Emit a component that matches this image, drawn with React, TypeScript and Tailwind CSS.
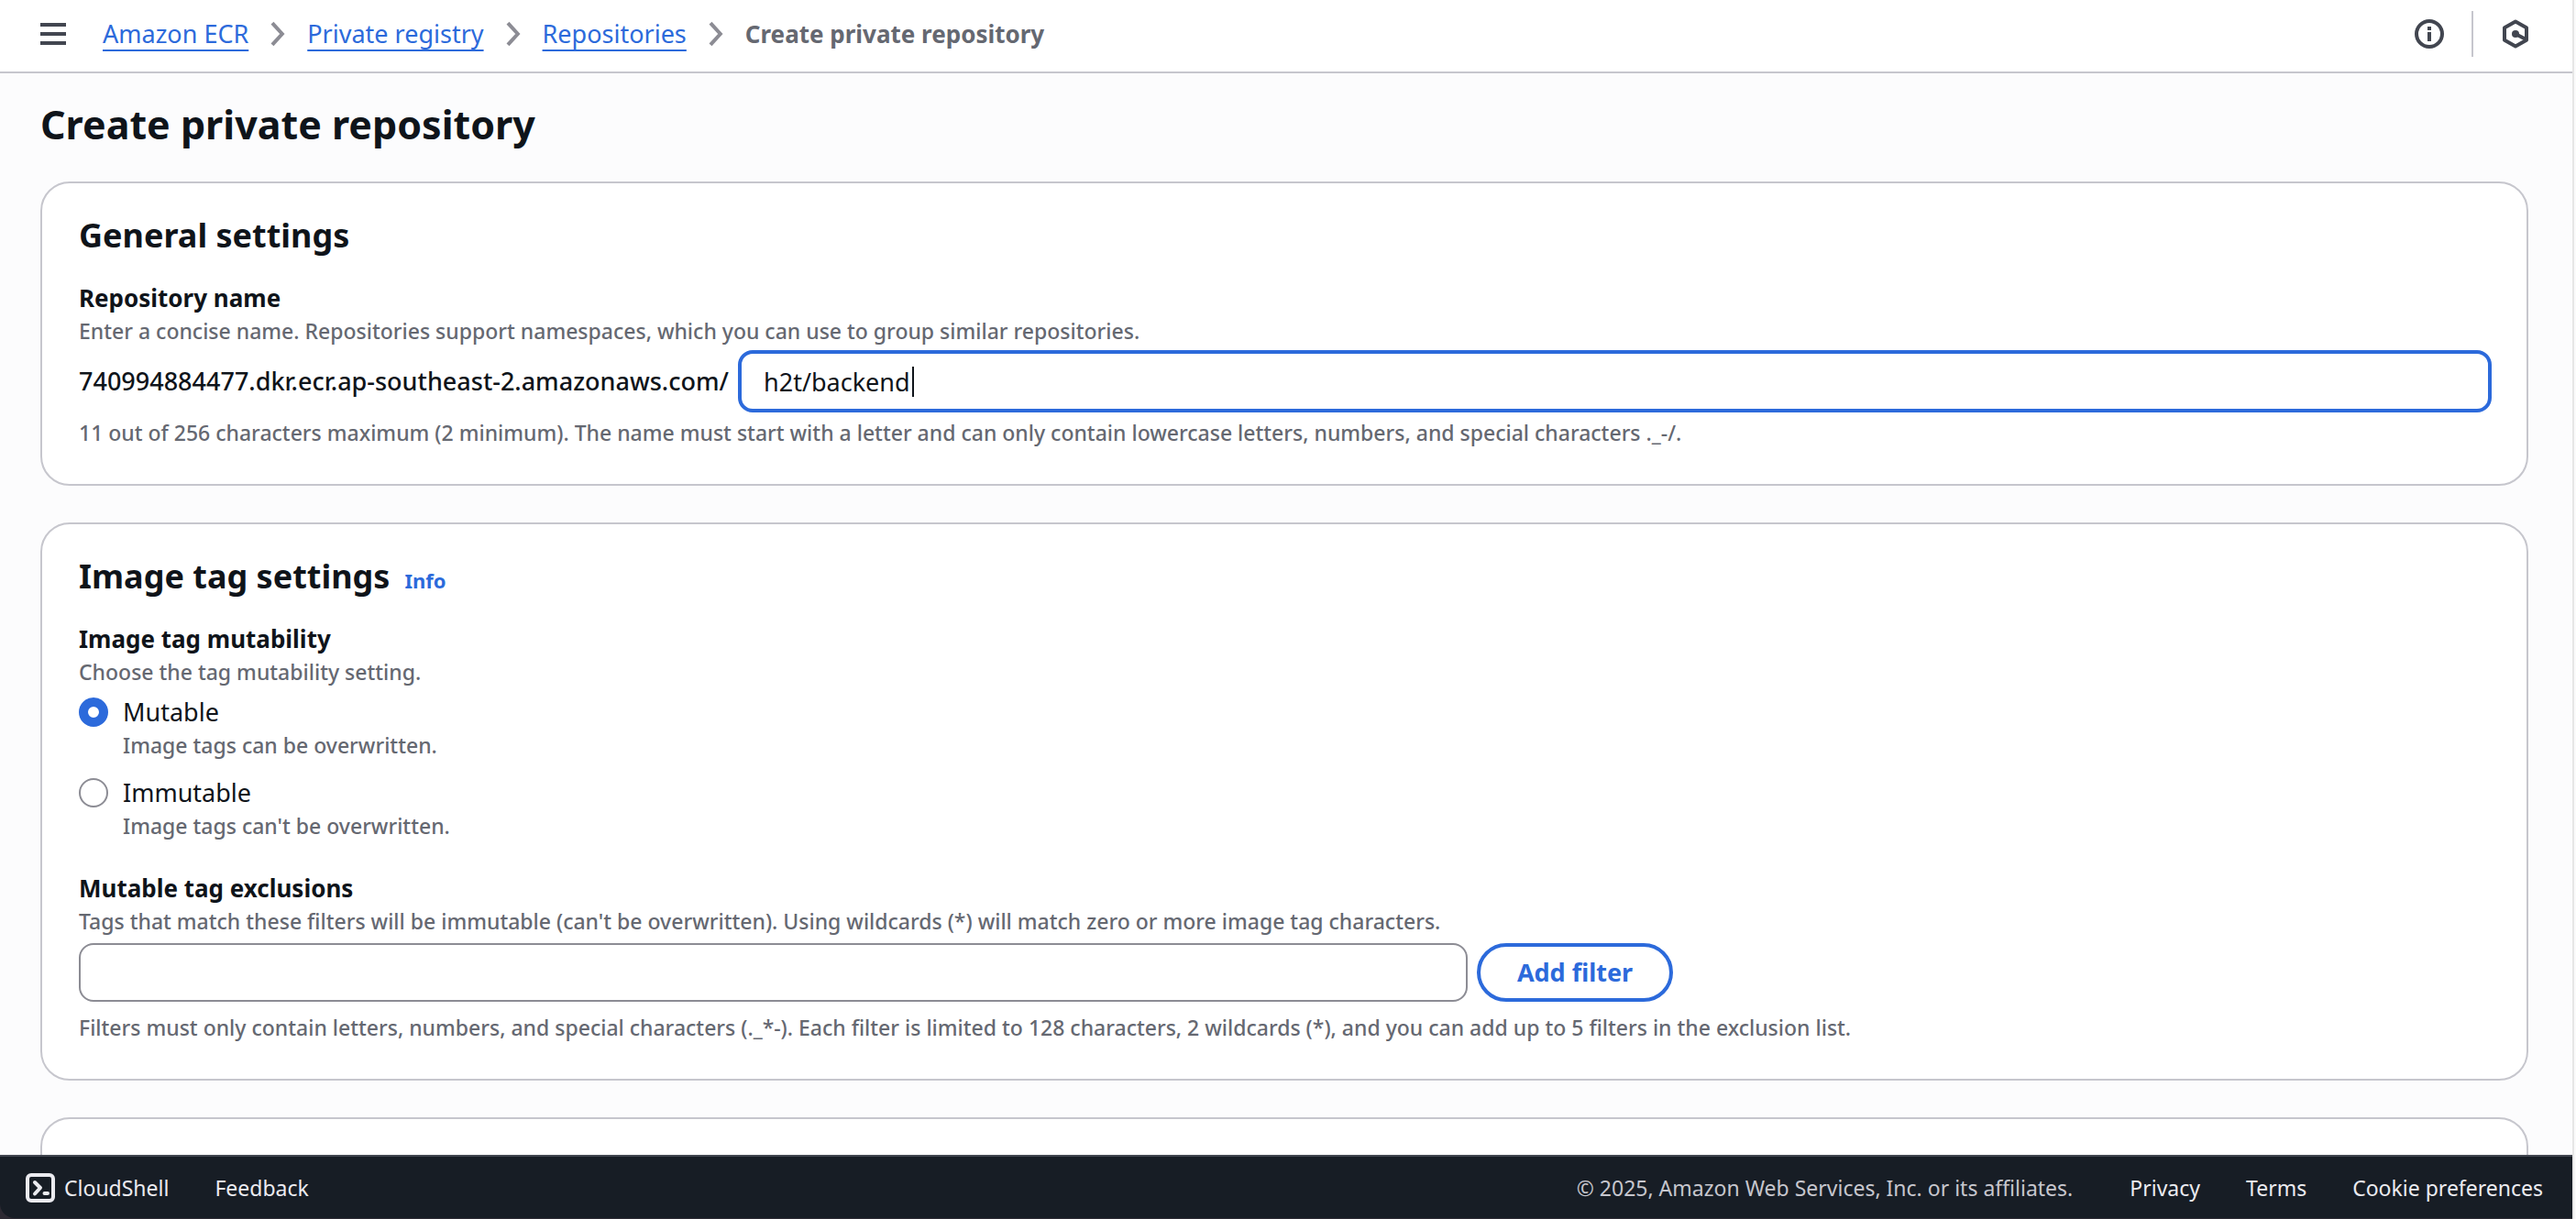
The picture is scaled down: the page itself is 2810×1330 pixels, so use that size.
import { useState, type ReactNode } from "react";

const crumbs = ["Amazon ECR", "Private registry", "Repositories"];

const tagModes = [
  { id: "mutable", label: "Mutable", hint: "Image tags can be overwritten." },
  { id: "immutable", label: "Immutable", hint: "Image tags can't be overwritten." },
];

function ChevronIcon() {
  return (
    <svg viewBox="0 0 16 28" className="h-7 w-4 shrink-0" fill="none" stroke="#8c8c94" strokeWidth="4" aria-hidden="true">
      <path d="M2 2.2 12.8 14 2 25.8" />
    </svg>
  );
}

function MenuIcon() {
  return (
    <svg viewBox="0 0 28 24" className="h-6 w-7" fill="#424650" aria-hidden="true">
      <path d="M0 0h28v4H0zM0 10h28v4H0zM0 20h28v4H0z" />
    </svg>
  );
}

function InfoIcon() {
  return (
    <svg viewBox="0 0 32 32" className="size-8" aria-hidden="true">
      <circle cx="16" cy="16" r="14" fill="none" stroke="#424650" strokeWidth="4" />
      <path d="M14 8h4v4h-4zM14 14h4v10h-4z" fill="#424650" />
    </svg>
  );
}

function HexagonIcon() {
  return (
    <svg viewBox="0 0 32 32" className="size-8" fill="none" stroke="#424650" strokeWidth="4" strokeLinejoin="round" aria-hidden="true">
      <path d="M16 2.6 28 9.3v13.4L16 29.4 4 22.7V9.3z" />
      <path d="m16 16 11 5.8" />
      <circle cx="16" cy="16" r="4" fill="#424650" stroke="none" />
    </svg>
  );
}

function ShellIcon() {
  return (
    <svg viewBox="0 0 32 32" className="size-8" fill="none" stroke="#ebebf0" strokeWidth="4" strokeLinecap="round" strokeLinejoin="round" aria-hidden="true">
      <rect x="2" y="2" width="28" height="28" rx="4" />
      <path d="m10 10 6 6-6 6.5M20.5 22h3.5" />
    </svg>
  );
}

function Card({ title, info, children }: { title?: string; info?: boolean; children?: ReactNode }) {
  return (
    <section className="min-h-40 shrink-0 rounded-[32px] border-2 border-[#c6c6cd] bg-white px-10 pt-[33px] pb-10">
      {title && (
        <div className="mb-6 flex items-baseline gap-4">
          <h2 className="text-[36px] leading-[48px] font-bold">{title}</h2>
          {info && (
            <a href="#info" className="text-[22px] leading-8 font-bold text-[#2c6adb]">
              Info
            </a>
          )}
        </div>
      )}
      {children}
    </section>
  );
}

function Hint({ id, children }: { id?: string; children: ReactNode }) {
  return (
    <p id={id} className="text-[23px] leading-8 font-medium text-[#656871]">
      {children}
    </p>
  );
}

export default function App() {
  const [name, setName] = useState("h2t/backend");
  const [mode, setMode] = useState("mutable");
  const [filter, setFilter] = useState("");

  return (
    <div className="h-screen bg-[#fafafa] pr-0.5 font-['Noto_Sans',sans-serif] text-[27px] leading-10 text-[#0f141a]">
      <div className="flex h-full flex-col border-r-2 border-[#e6e6e6] bg-[#fcfcfd]">
        <header className="flex items-center justify-between border-b-2 border-[#c6c6cd] bg-white pt-3 pr-[46px] pb-4 pl-11">
          <div className="flex items-center gap-10">
            <button type="button" aria-label="Open navigation">
              <MenuIcon />
            </button>
            <nav aria-label="Breadcrumbs">
              <ol className="flex items-center gap-6">
                {crumbs.map((crumb) => (
                  <li key={crumb} className="flex items-center gap-6">
                    <a href="#crumb" className="text-[#2c6adb] underline decoration-2 underline-offset-[7px] [text-decoration-skip-ink:none]">
                      {crumb}
                    </a>
                    <ChevronIcon />
                  </li>
                ))}
                <li aria-current="page" className="text-[26px] font-bold text-[#656871]">
                  Create private repository
                </li>
              </ol>
            </nav>
          </div>
          <div className="flex items-center gap-[30px]">
            <button type="button" aria-label="Information">
              <InfoIcon />
            </button>
            <div className="h-[50px] w-0.5 bg-[#c6c6cd]" />
            <button type="button" aria-label="Tools">
              <HexagonIcon />
            </button>
          </div>
        </header>

        <main className="flex min-h-0 flex-1 flex-col gap-10 overflow-hidden pt-[26px] pr-12 pl-11">
          <h1 className="-mb-2 shrink-0 text-[43px] leading-[60px] font-bold">Create private repository</h1>

          <Card title="General settings">
            <label htmlFor="repo-name" className="block text-[26px] font-bold">
              Repository name
            </label>
            <Hint>Enter a concise name. Repositories support namespaces, which you can use to group similar repositories.</Hint>
            <div className="mt-[5px] -mr-0.5 mb-1.5 flex items-center">
              <span className="w-[719px] shrink-0 font-medium">740994884477.dkr.ecr.ap-southeast-2.amazonaws.com/</span>
              <div className="relative flex-1">
                <input
                  id="repo-name"
                  type="text"
                  value={name}
                  onChange={(e) => setName(e.target.value)}
                  aria-describedby="repo-name-hint"
                  className="block h-[68px] w-full rounded-2xl border-4 border-[#2c6adb] bg-white px-6 outline-none"
                />
                <span className="absolute top-[18px] left-[190px] h-[33px] w-0.5 bg-[#0f141a]" aria-hidden="true" />
              </div>
            </div>
            <Hint id="repo-name-hint">
              11 out of 256 characters maximum (2 minimum). The name must start with a letter and can only contain lowercase
              letters, numbers, and special characters ._-/.
            </Hint>
          </Card>

          <Card title="Image tag settings" info>
            <fieldset>
              <legend className="text-[26px] font-bold">Image tag mutability</legend>
              <Hint>Choose the tag mutability setting.</Hint>
              <div className="mt-2 flex flex-col gap-4">
                {tagModes.map((m) => (
                  <div key={m.id} className="flex items-start gap-4">
                    <input
                      id={m.id}
                      type="radio"
                      name="tag-mode"
                      checked={mode === m.id}
                      onChange={() => setMode(m.id)}
                      aria-describedby={`${m.id}-hint`}
                      className="mt-1 size-8 shrink-0 appearance-none rounded-full border-2 border-[#8c8c94] bg-white checked:border-[10px] checked:border-[#2c6adb]"
                    />
                    <div>
                      <label htmlFor={m.id} className="block">
                        {m.label}
                      </label>
                      <Hint id={`${m.id}-hint`}>{m.hint}</Hint>
                    </div>
                  </div>
                ))}
              </div>
            </fieldset>

            <label htmlFor="exclusions" className="mt-8 block text-[26px] font-bold">
              Mutable tag exclusions
            </label>
            <Hint>
              Tags that match these filters will be immutable (can't be overwritten). Using wildcards (*) will match zero or
              more image tag characters.
            </Hint>
            <div className="mt-2 mb-3 flex items-center gap-2.5">
              <input
                id="exclusions"
                type="text"
                value={filter}
                onChange={(e) => setFilter(e.target.value)}
                aria-describedby="exclusions-hint"
                className="h-16 w-[57.6%] rounded-2xl border-2 border-[#8c8c94] bg-white px-6 outline-none"
              />
              <button type="button" className="h-16 rounded-full border-4 border-[#2c6adb] bg-white px-10 font-bold text-[#2c6adb]">
                Add filter
              </button>
            </div>
            <Hint id="exclusions-hint">
              Filters must only contain letters, numbers, and special characters (._*-). Each filter is limited to 128
              characters, 2 wildcards (*), and you can add up to 5 filters in the exclusion list.
            </Hint>
          </Card>

          <Card />
        </main>

        <footer className="bg-[#2d2a33] pb-px">
          <div className="flex items-center justify-between rounded-bl-2xl border-t-2 border-[#424650] bg-[#171d25] pt-[18px] pr-8 pb-[17px] pl-7 text-[23px] leading-8 text-[#ebebf0]">
            <div className="flex items-center gap-[50px]">
              <button type="button" className="flex items-center gap-2.5">
                <ShellIcon />
                CloudShell
              </button>
              <button type="button">Feedback</button>
            </div>
            <div className="flex items-center gap-[50px]">
              <span className="mr-3 text-[#c6c6cd]">© 2025, Amazon Web Services, Inc. or its affiliates.</span>
              <a href="#privacy">Privacy</a>
              <a href="#terms">Terms</a>
              <a href="#cookies">Cookie preferences</a>
            </div>
          </div>
        </footer>
      </div>
    </div>
  );
}
